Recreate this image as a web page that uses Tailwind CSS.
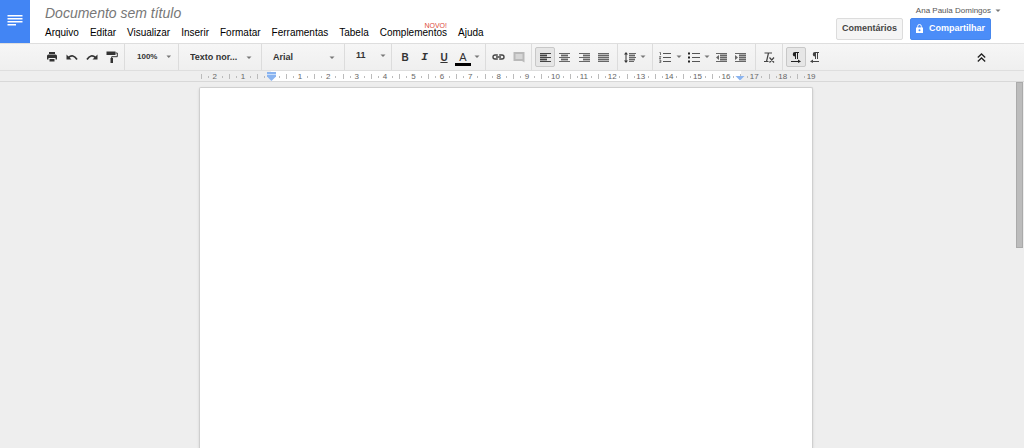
<!DOCTYPE html>
<html lang="pt-BR">
<head>
<meta charset="utf-8">
<title>Documento sem título</title>
<script src="https://cdn.jsdelivr.net/npm/@tailwindcss/browser@4"></script>
</head>
<body class="flex h-screen flex-col overflow-hidden bg-[#eeeeee] font-['Liberation_Sans',Arial,sans-serif] text-[10px] text-[#222]">

<svg class="hidden" aria-hidden="true">
  <symbol id="arrow" viewBox="0 0 6 4"><path d="M.5.5h5L3 3z" fill="#777"/></symbol>
</svg>

<header class="flex h-11 shrink-0 bg-white">
  <a href="#" aria-label="Página inicial do Documentos" class="flex w-[30px] shrink-0 items-center justify-center bg-[#4285f4]">
    <svg class="mb-1 h-3 w-4" viewBox="0 0 16 12" fill="#fff"><path d="M.5 1h15v1.4H.5zM.5 4h15v1.4H.5zM.5 7h15v1.4H.5zM.5 10h8.500v1.400H.5z"/></svg>
  </a>
  <div class="flex flex-1 flex-col pl-[15px] pt-1">
    <input type="text" aria-label="Título do documento" value="Documento sem título" class="h-[18px] w-64 text-[14px] leading-[18px] text-[#777] italic outline-none">
    <nav class="mt-1 flex gap-[11px] leading-[14px] whitespace-nowrap text-black">
      <button>Arquivo</button>
      <button>Editar</button>
      <button>Visualizar</button>
      <button>Inserir</button>
      <button>Formatar</button>
      <button>Ferramentas</button>
      <button>Tabela</button>
      <button class="relative">Complementos<span class="absolute -top-1 right-0 text-[7px] leading-[7px] text-[#dd4b39]">NOVO!</span></button>
      <button>Ajuda</button>
    </nav>
  </div>
  <div class="flex flex-col pr-[33px] pt-1">
    <button class="-mr-[10px] flex h-[14px] items-center justify-end gap-1 text-[8px] text-[#555]">Ana Paula Domingos <svg class="h-1 w-[6px]"><use href="#arrow"/></svg></button>
    <div class="flex gap-[7px] text-[9px] font-bold">
      <button class="h-[22px] w-[67px] rounded-[2px] border border-[#dcdcdc] bg-[#f5f5f5] text-[#444]">Comentários</button>
      <button class="flex h-[22px] w-[81px] items-center justify-center gap-[6px] rounded-[2px] border border-[#4787ed] bg-[#4b8df8] text-white">
        <svg class="mb-px h-[9px] w-[7px]" viewBox="0 0 7 9"><path d="M1.700 4V2.300a1.800 1.800 0 0 1 3.600 0V4" fill="none" stroke="#fff"/><path d="M0 3.500h7V9H0z" fill="#fff"/><circle cx="3.500" cy="6.200" r="1" fill="#4b8df8"/></svg>
        Compartilhar</button>
    </div>
  </div>
</header>

<div role="toolbar" aria-label="Formatação" class="-mt-px flex h-7 shrink-0 items-stretch border-y border-[#dedede] bg-linear-to-b from-[#f6f6f6] to-[#efefef] pl-[42px] text-[8px] font-bold text-[#333]">
  <div class="flex w-[82px] items-center">
    <button aria-label="Imprimir" class="flex h-5 w-5 items-center justify-center"><svg class="h-[10px] w-3" viewBox="0 0 12 10" fill="#333"><path d="M3 0h6v2H3zM2.500 2.500h7Q11 2.500 11 4v3.500H9.500V6h-7v1.500H1V4q0-1.500 1.500-1.500zM3.500 7h5v2.500h-5z"/></svg></button>
    <button aria-label="Desfazer" class="flex h-5 w-5 items-center justify-center"><svg class="h-[10px] w-3" viewBox="0 0 12 10"><path d="M.5 2.500v5h5z" fill="#333"/><path d="M2.500 5.500Q7 1.500 11 7.500" fill="none" stroke="#333" stroke-width="1.700"/></svg></button>
    <button aria-label="Refazer" class="flex h-5 w-5 items-center justify-center"><svg class="h-[10px] w-3" viewBox="0 0 12 10"><path d="M11.500 2.500v5h-5z" fill="#333"/><path d="M9.500 5.500Q5 1.500 1 7.500" fill="none" stroke="#333" stroke-width="1.700"/></svg></button>
    <button aria-label="Pintar formatação" class="flex h-5 w-5 items-center justify-center"><svg class="h-3 w-3" viewBox="0 0 12 12"><path d="M.5.500h9v3.500h-9zM4.500 7h2.500v5H4.500z" fill="#333"/><path d="M9.500 2h1.800v3.700H5.700V8" fill="none" stroke="#333"/></svg></button>
  </div>
  <label class="flex w-[54px] items-center justify-between border-l border-[#dcdcdc] pr-[6px] pl-3"><select aria-label="Zoom" class="w-8 appearance-none outline-none"><option>100%</option></select><svg class="h-1 w-[6px]"><use href="#arrow"/></svg></label>
  <label class="flex w-[83px] items-center justify-between border-l border-[#dcdcdc] pt-px pr-[9px] pl-[11px] text-[9px]"><select aria-label="Estilo" class="w-14 appearance-none outline-none"><option>Texto nor...</option></select><svg class="h-1 w-[6px]"><use href="#arrow"/></svg></label>
  <label class="flex w-[83px] items-center justify-between border-l border-[#dcdcdc] pt-px pr-[9px] pl-[11px] text-[9px]"><select aria-label="Fonte" class="w-14 appearance-none outline-none"><option>Arial</option></select><svg class="h-1 w-[6px]"><use href="#arrow"/></svg></label>
  <label class="flex w-[47px] items-center justify-between border-l border-[#dcdcdc] pr-[5px] pb-[2px] pl-[11px] text-[9px]"><select aria-label="Tamanho da fonte" class="w-5 appearance-none outline-none"><option>11</option></select><svg class="h-1 w-[6px]"><use href="#arrow"/></svg></label>
  <div class="flex w-[94px] items-center border-l border-[#dcdcdc] pl-[3px] text-[10px]">
    <button aria-label="Negrito" class="h-5 w-5">B</button>
    <button aria-label="Itálico" class="h-5 w-[19px] font-['Liberation_Mono',monospace] text-[11px] italic">I</button>
    <button aria-label="Sublinhado" class="h-5 w-5 underline">U</button>
    <button aria-label="Cor do texto" class="ml-px flex h-5 w-[27px] items-center justify-between"><span class="w-4 border-b-3 border-black pt-[3px] text-[11px] leading-[12px] font-normal">A</span><svg class="mr-[2px] h-1 w-[6px]"><use href="#arrow"/></svg></button>
  </div>
  <div class="flex w-[46px] items-center border-l border-[#dcdcdc] pl-[2px]">
    <button aria-label="Inserir link" class="flex h-5 w-5 items-center justify-center"><svg class="h-[6px] w-[13px]" viewBox="0 0 13 6" fill="none" stroke="#444" stroke-width="1.400"><path d="M5.800 1H3a2 2 0 0 0 0 4h2.800M7.200 1H10a2 2 0 0 1 0 4H7.200M4 3h5"/></svg></button>
    <button aria-label="Inserir comentário" class="flex h-5 w-[22px] items-center justify-center"><svg class="h-3 w-3" viewBox="0 0 12 12"><path d="M.5 1h11v10.500L9 10H.5z" fill="#b9b9b9"/><path d="M2.500 3h7v5h-7z" fill="#d6d6d6"/></svg></button>
  </div>
  <div class="flex w-[86px] items-center border-l border-[#dcdcdc] pl-[3px]">
    <button aria-label="Alinhar à esquerda" aria-pressed="true" class="flex h-5 w-5 items-center justify-center rounded-[2px] border border-[#c8c8c8] bg-[#e6e6e6]"><svg class="h-[9px] w-[11px]" viewBox="0 0 11 9" fill="#444"><path d="M0 0h11v1H0zM0 2h7v1H0zM0 4h11v1H0zM0 6h7v1H0zM0 8h11v1H0z"/><path d="M0 0h7v9H0z" opacity=".4"/></svg></button>
    <button aria-label="Centralizar" class="flex h-5 w-[19px] items-center justify-center"><svg class="h-[9px] w-[11px]" viewBox="0 0 11 9" fill="#666"><path d="M0 0h11v1H0zM2 2h7v1H2zM0 4h11v1H0zM2 6h7v1H2zM0 8h11v1H0z"/><path d="M2 0h7v9H2z" opacity=".4"/></svg></button>
    <button aria-label="Alinhar à direita" class="flex h-5 w-5 items-center justify-center"><svg class="h-[9px] w-[11px]" viewBox="0 0 11 9" fill="#666"><path d="M0 0h11v1H0zM4 2h7v1H4zM0 4h11v1H0zM4 6h7v1H4zM0 8h11v1H0z"/><path d="M4 0h7v9H4z" opacity=".4"/></svg></button>
    <button aria-label="Justificar" class="flex h-5 w-[19px] items-center justify-center"><svg class="h-[9px] w-[11px]" viewBox="0 0 11 9" fill="#666"><path d="M0 0h11v1H0zM0 2h11v1H0zM0 4h11v1H0zM0 6h11v1H0zM0 8h11v1H0z"/><path d="M0 0h11v9H0z" opacity=".4"/></svg></button>
  </div>
  <div class="flex w-[35px] items-center border-l border-[#dcdcdc] pl-[6px]">
    <button aria-label="Espaçamento entre linhas" class="flex h-5 items-center gap-1"><svg class="h-[11px] w-3" viewBox="0 0 12 11"><path d="M2 0l2 2.500H2.500v6H4L2 11 0 8.500h1.500v-6H0z" fill="#333"/><path d="M5 1h7v1H5zM5 3h6v1H5zM5 5h7v1H5zM5 7h6v1H5zM5 9h5v1H5z" fill="#666"/><path d="M5 1h6v8H5z" fill="#666" opacity=".4"/></svg><svg class="h-1 w-[6px]"><use href="#arrow"/></svg></button>
  </div>
  <div class="flex w-[103px] items-center border-l border-[#dcdcdc] pl-[6px]">
    <button aria-label="Lista numerada" class="flex h-5 w-[29px] items-center gap-[5px]"><svg class="h-[11px] w-3" viewBox="0 0 12 11"><path d="M4 1h8v1H4zM4 5h8v1H4zM4 9h8v1H4z" fill="#555"/><path d="M.5.500h1v2.500M.3 4.500h1.500L.3 6.500h1.700M.3 8h1.500v2.500H.3M.5 9.200h1.300" fill="none" stroke="#555" stroke-width=".8"/></svg><svg class="h-1 w-[6px]"><use href="#arrow"/></svg></button>
    <button aria-label="Lista com marcadores" class="flex h-5 w-[28px] items-center gap-[4px]"><svg class="h-[11px] w-3" viewBox="0 0 12 11"><path d="M4 1h8v1H4zM4 5h8v1H4zM4 9h8v1H4z" fill="#555"/><path d="M0 .5h2v2H0zM0 4.500h2v2H0zM0 8.500h2v2H0z" fill="#222"/></svg><svg class="h-1 w-[6px]"><use href="#arrow"/></svg></button>
    <button aria-label="Diminuir recuo" class="flex h-5 w-[19px] items-center"><svg class="h-[9px] w-[11px]" viewBox="0 0 11 9" fill="#666"><path d="M0 0h11v1H0zM4 2h7v1H4zM4 4h7v1H4zM4 6h7v1H4zM0 8h11v1H0zM3 2v5L0 4.500z"/><path d="M4 0h7v9H4z" opacity=".5"/></svg></button>
    <button aria-label="Aumentar recuo" class="flex h-5 w-[19px] items-center"><svg class="h-[9px] w-[11px]" viewBox="0 0 11 9" fill="#666"><path d="M0 0h11v1H0zM4 2h7v1H4zM4 4h7v1H4zM4 6h7v1H4zM0 8h11v1H0zM0 2v5l3-2.500z"/><path d="M4 0h7v9H4z" opacity=".5"/></svg></button>
  </div>
  <div class="flex w-[27px] items-center justify-center border-l border-[#dcdcdc]">
    <button aria-label="Limpar formatação" class="flex h-5 w-5 items-center justify-center"><svg class="h-[11px] w-3" viewBox="0 0 12 11" fill="none" stroke="#444" stroke-width="1.200"><path d="M1.500 1H9M5.500 1L3.500 9.500M1 9.500h4.500M6.500 5.500l4.500 5M11 5.500l-4.500 5"/></svg></button>
  </div>
  <div class="flex items-center border-l border-[#dcdcdc] pl-[3px]">
    <button aria-label="Da esquerda para a direita" aria-pressed="true" class="flex h-5 w-5 items-center justify-center rounded-[2px] border border-[#c8c8c8] bg-[#e6e6e6]"><svg class="h-[11px] w-[10px]" viewBox="0 0 10 11" fill="#222"><path d="M8 0v1H7v6H6V1H5v6H4V4.500a2.200 2.200 0 0 1 0-4.500zM0 9h7V7.500L10 9.500 7 11v-1H0z"/></svg></button>
    <button aria-label="Da direita para a esquerda" class="flex h-5 w-[18px] items-center justify-center"><svg class="h-[11px] w-[10px]" viewBox="0 0 10 11" fill="#444"><path d="M9 0v1H8v6H7V1H6v6H5V4.500a2.200 2.200 0 0 1 0-4.500zM9 9H3V7.500L0 9.500 3 11v-1h6z"/></svg></button>
  </div>
  <button aria-label="Ocultar menus" class="mr-[38px] ml-auto"><svg class="h-[9px] w-[9px]" viewBox="0 0 9 9" fill="none" stroke="#222" stroke-width="1.300"><path d="M.8 4.500l3.700-3.500 3.700 3.500M.8 8.500L4.500 5l3.700 3.500"/></svg></button>
</div>

<div class="h-[11px] shrink-0 border-b border-[#d8d8d8] pr-3">
  <svg id="ruler" class="mx-auto block h-[10px] w-[620px]" viewBox="-4 0 620 10" role="img" aria-label="Régua">
    <path d="M71 0h470v10H71z" fill="#fff"/>
    <g id="marks" fill="#666" font-size="8" text-anchor="middle"></g>
    <path d="M67 1h9v4.500L71.500 10 67 5.500z" fill="#8ab4f0"/><path d="M67 3.500h9" stroke="#c9defa"/>
    <path d="M535.500 5h9L540 9.500z" fill="#8ab4f0"/>
  </svg>
</div>

<main class="flex min-h-0 flex-1">
  <div class="flex-1 overflow-hidden pt-[5px]">
    <article contenteditable="true" aria-label="Conteúdo do documento" class="mx-auto h-full w-[614px] rounded-t-[2px] border border-b-0 border-[#cfcfcf] bg-white shadow-sm outline-none"></article>
  </div>
  <div class="flex w-3 justify-end" aria-hidden="true"><div class="mr-px h-[166px] w-[7px] border border-[#aaa] bg-[#bcbcbc]"></div></div>
</main>

<script>
  // Ruler scale: one labelled mark per centimetre, a long tick at each half and dots at the quarters
  const cm = 28.4, zero = 71.5;
  let out = '';
  for (let n = -2.5; n <= 19; n += 0.25) {
    const x = zero + n * cm;
    if (n === 0) continue;
    if (Number.isInteger(n)) out += `<text x="${x}" y="8">${Math.abs(n)}</text>`;
    else if (Number.isInteger(n * 2)) out += `<path d="M${Math.round(x)} 3h1v5h-1z" fill="#bbb"/>`;
    else out += `<path d="M${Math.round(x)} 5h1v2h-1z" fill="#bbb"/>`;
  }
  document.getElementById('marks').innerHTML = out;
</script>
</body>
</html>
